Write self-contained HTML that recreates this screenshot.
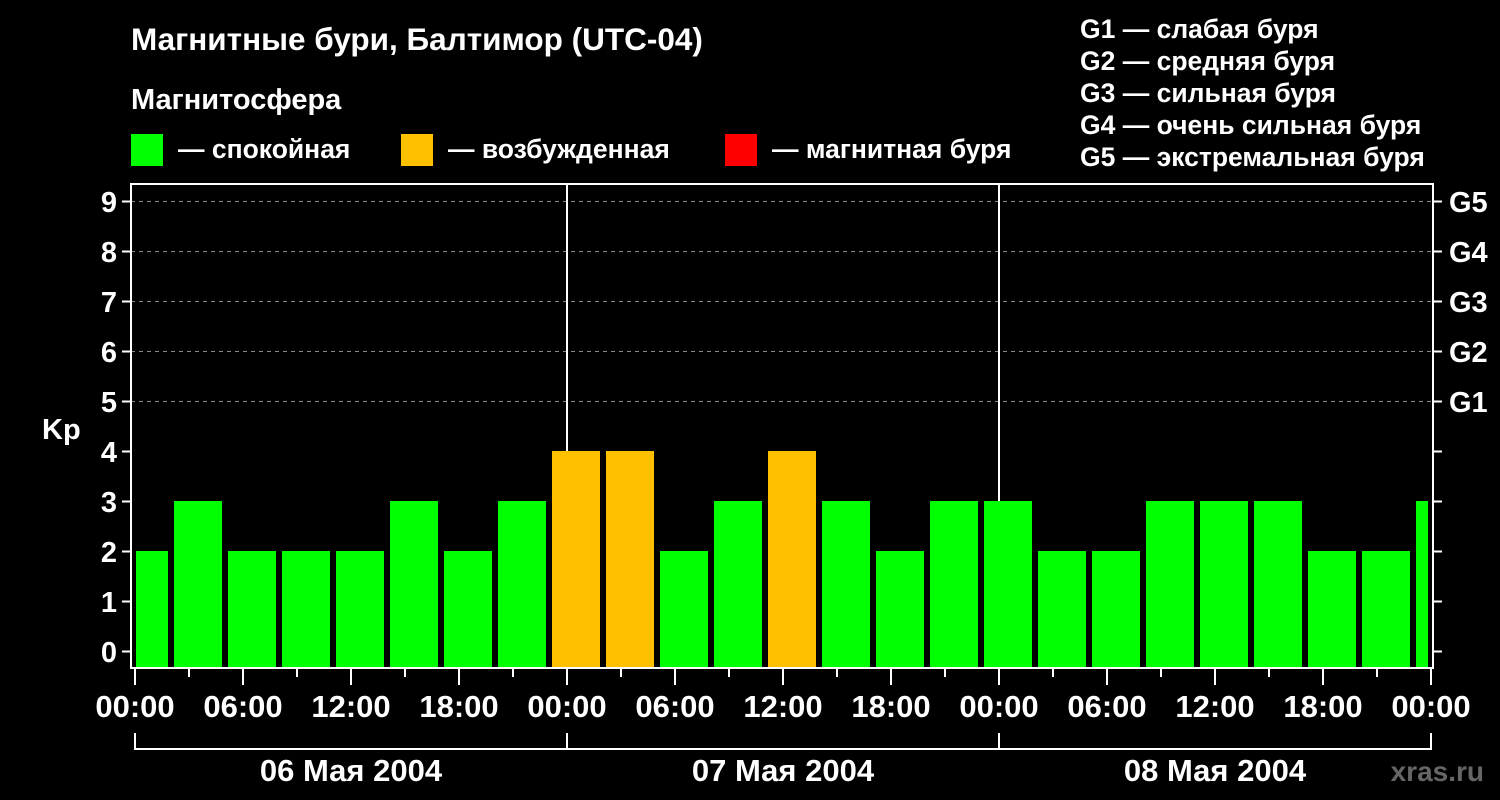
<!DOCTYPE html>
<html><head><meta charset="utf-8"><style>
html,body{margin:0;padding:0;background:#000;}
svg{display:block;font-family:"Liberation Sans",Arial,sans-serif;font-weight:bold;}
</style></head><body>
<svg width="1500" height="800" viewBox="0 0 1500 800" xmlns="http://www.w3.org/2000/svg">
<rect width="1500" height="800" fill="#000"/>
<g fill="#fff">
<text x="131" y="50" font-size="31.5">Магнитные бури, Балтимор (UTC-04)</text>
<text x="131" y="109" font-size="29">Магнитосфера</text>
<g font-size="26.5">
<text x="178" y="158">— спокойная</text>
<text x="448" y="158">— возбужденная</text>
<text x="772" y="158">— магнитная буря</text>
<text x="1080" y="38">G1 — слабая буря</text>
<text x="1080" y="70">G2 — средняя буря</text>
<text x="1080" y="102">G3 — сильная буря</text>
<text x="1080" y="134">G4 — очень сильная буря</text>
<text x="1080" y="166">G5 — экстремальная буря</text>
</g>
</g>
<rect x="131" y="134" width="32" height="32" fill="#00ff00"/>
<rect x="401" y="134" width="32" height="32" fill="#ffc000"/>
<rect x="725" y="134" width="32" height="32" fill="#ff0000"/>
<g stroke="#888" stroke-width="1" stroke-dasharray="4,4">
<line x1="131" y1="201.5" x2="1433" y2="201.5"/>
<line x1="131" y1="251.5" x2="1433" y2="251.5"/>
<line x1="131" y1="301.5" x2="1433" y2="301.5"/>
<line x1="131" y1="351.5" x2="1433" y2="351.5"/>
<line x1="131" y1="401.5" x2="1433" y2="401.5"/>
</g>
<g stroke="#fff" stroke-width="2">
<line x1="567" y1="183" x2="567" y2="668"/>
<line x1="999" y1="183" x2="999" y2="668"/>
</g>
<svg x="136" y="0" width="1292" height="800">
<g transform="translate(-136,0)">
<rect x="120" y="551" width="48" height="117" fill="#00ff00"/>
<rect x="174" y="501" width="48" height="167" fill="#00ff00"/>
<rect x="228" y="551" width="48" height="117" fill="#00ff00"/>
<rect x="282" y="551" width="48" height="117" fill="#00ff00"/>
<rect x="336" y="551" width="48" height="117" fill="#00ff00"/>
<rect x="390" y="501" width="48" height="167" fill="#00ff00"/>
<rect x="444" y="551" width="48" height="117" fill="#00ff00"/>
<rect x="498" y="501" width="48" height="167" fill="#00ff00"/>
<rect x="552" y="451" width="48" height="217" fill="#ffc000"/>
<rect x="606" y="451" width="48" height="217" fill="#ffc000"/>
<rect x="660" y="551" width="48" height="117" fill="#00ff00"/>
<rect x="714" y="501" width="48" height="167" fill="#00ff00"/>
<rect x="768" y="451" width="48" height="217" fill="#ffc000"/>
<rect x="822" y="501" width="48" height="167" fill="#00ff00"/>
<rect x="876" y="551" width="48" height="117" fill="#00ff00"/>
<rect x="930" y="501" width="48" height="167" fill="#00ff00"/>
<rect x="984" y="501" width="48" height="167" fill="#00ff00"/>
<rect x="1038" y="551" width="48" height="117" fill="#00ff00"/>
<rect x="1092" y="551" width="48" height="117" fill="#00ff00"/>
<rect x="1146" y="501" width="48" height="167" fill="#00ff00"/>
<rect x="1200" y="501" width="48" height="167" fill="#00ff00"/>
<rect x="1254" y="501" width="48" height="167" fill="#00ff00"/>
<rect x="1308" y="551" width="48" height="117" fill="#00ff00"/>
<rect x="1362" y="551" width="48" height="117" fill="#00ff00"/>
<rect x="1416" y="501" width="48" height="167" fill="#00ff00"/>
</g>
</svg>
<g stroke="#fff" stroke-width="2" fill="none">
<rect x="131" y="184" width="1302" height="484"/>
<path d="M122 201.5h9M122 251.5h9M122 301.5h9M122 351.5h9M122 401.5h9M122 451.5h9M122 501.5h9M122 551.5h9M122 601.5h9M122 651.5h9"/>
<path d="M1433 201.5h9M1433 251.5h9M1433 301.5h9M1433 351.5h9M1433 401.5h9M1433 451.5h9M1433 501.5h9M1433 551.5h9M1433 601.5h9M1433 651.5h9"/>
<path d="M135 668v17M243 668v17M351 668v17M459 668v17M567 668v17M675 668v17M783 668v17M891 668v17M999 668v17M1107 668v17M1215 668v17M1323 668v17M1431 668v17"/>
<path d="M189 668v9M297 668v9M405 668v9M513 668v9M621 668v9M729 668v9M837 668v9M945 668v9M1053 668v9M1161 668v9M1269 668v9M1377 668v9"/>
<path d="M135 733v16H1431V733M567 733v16M999 733v16"/>
</g>
<g fill="#fff" font-size="29" text-anchor="end">
<text x="117" y="212">9</text><text x="117" y="262">8</text><text x="117" y="312">7</text>
<text x="117" y="362">6</text><text x="117" y="412">5</text><text x="117" y="462">4</text>
<text x="117" y="512">3</text><text x="117" y="562">2</text><text x="117" y="612">1</text>
<text x="117" y="662">0</text>
</g>
<text x="42" y="439" fill="#fff" font-size="29">Kp</text>
<g fill="#fff" font-size="29">
<text x="1449" y="212">G5</text><text x="1449" y="262">G4</text><text x="1449" y="312">G3</text>
<text x="1449" y="362">G2</text><text x="1449" y="412">G1</text>
</g>
<g fill="#fff" font-size="31" text-anchor="middle">
<text x="135" y="717">00:00</text><text x="243" y="717">06:00</text><text x="351" y="717">12:00</text>
<text x="459" y="717">18:00</text><text x="567" y="717">00:00</text><text x="675" y="717">06:00</text>
<text x="783" y="717">12:00</text><text x="891" y="717">18:00</text><text x="999" y="717">00:00</text>
<text x="1107" y="717">06:00</text><text x="1215" y="717">12:00</text><text x="1323" y="717">18:00</text>
<text x="1431" y="717">00:00</text>
<text x="351" y="781">06 Мая 2004</text>
<text x="783" y="781">07 Мая 2004</text>
<text x="1215" y="781">08 Мая 2004</text>
</g>
<text x="1484" y="781" fill="#666" font-size="28" text-anchor="end">xras.ru</text>
</svg>
</body></html>
